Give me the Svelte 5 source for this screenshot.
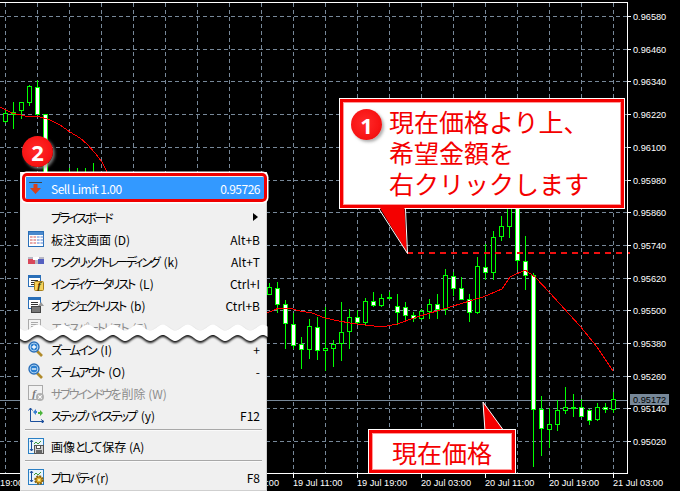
<script>
	// x, wick top, body top, body bottom, wick bottom, w = white (bear) / h = hollow (bull)
	const candles = [
		[5, 110, 113, 121, 123, 'h'], [13, 102, 112, 114, 129, 'h'], [21, 102, 102, 110, 119, 'h'],
		[29, 85, 86, 102, 106, 'h'], [37, 80, 87, 114, 114, 'w'], [45, 114, 114, 176, 176, 'w'],
		[69, 168, 176, 176, 176, 'h'], [77, 168, 176, 176, 176, 'h'], [85, 168, 176, 176, 176, 'h'], [93, 163, 176, 176, 176, 'h'],
		[269, 283, 287, 294, 295, 'h'], [277, 282, 288, 304, 313, 'w'], [285, 300, 304, 323, 349, 'w'],
		[293, 313, 324, 345, 349, 'w'], [301, 337, 344, 349, 369, 'w'], [309, 319, 326, 349, 359, 'h'],
		[317, 317, 327, 350, 360, 'w'], [325, 307, 348, 350, 371, 'h'], [333, 340, 344, 348, 367, 'h'],
		[341, 302, 332, 343, 361, 'h'], [349, 309, 317, 331, 349, 'h'], [357, 310, 317, 322, 325, 'w'],
		[365, 298, 301, 322, 325, 'h'], [373, 292, 301, 305, 307, 'w'], [381, 294, 298, 305, 307, 'h'],
		[389, 292, 297, 298, 299, 'w'], [397, 294, 306, 312, 325, 'w'], [405, 302, 307, 315, 322, 'w'],
		[413, 312, 315, 318, 322, 'w'], [421, 309, 311, 318, 320, 'h'], [429, 299, 304, 311, 319, 'h'],
		[437, 294, 304, 309, 319, 'w'], [445, 269, 275, 309, 315, 'h'], [453, 272, 276, 288, 296, 'w'],
		[461, 277, 288, 299, 299, 'w'], [469, 294, 299, 312, 322, 'w'], [477, 257, 266, 312, 314, 'h'],
		[485, 244, 267, 272, 280, 'w'], [493, 231, 237, 272, 280, 'h'], [501, 216, 226, 236, 241, 'h'],
		[509, 200, 205, 226, 238, 'h'], [517, 200, 205, 260, 270, 'w'], [525, 236, 261, 275, 290, 'w'],
		[533, 273, 275, 409, 467, 'w'], [541, 396, 409, 428, 456, 'w'], [549, 408, 424, 429, 448, 'h'],
		[557, 400, 410, 424, 431, 'h'], [565, 387, 407, 410, 414, 'h'], [573, 394, 407, 408, 417, 'h'],
		[581, 399, 407, 416, 417, 'w'], [589, 409, 410, 420, 425, 'w'], [597, 403, 407, 419, 421, 'h'],
		[605, 403, 407, 409, 413, 'w'], [613, 392, 399, 409, 413, 'h']
	];
	const maLeft = '0,107 12,113 25,116 37,116 50,120 60,125 70,132 80,138 87,144 95,153 102,162 108,174';
	const maRight = '262,315 267,313 279,308 289,308 300,311 312,313 325,318 339,321 350,323 357,324 382,327 397,324 417,317 450,307 483,297 502,289 510,277 525,270 535,277 550,293 580,326 597,347 613,371';

	const vLines = Array.from({ length: 20 }, (_, i) => 5 + i * 32);
	const prices = ['0.96580', '0.96460', '0.96340', '0.96220', '0.96100', '0.95980', '0.95860', '0.95740', '0.95620', '0.95500', '0.95380', '0.95260', '0.95140', '0.95020'];
	const priceY = (i) => Math.round(16 + i * 32.7);
	const times = [
		[-27, '18 Jul 19:00'], [229, '19 Jul 03:00'], [293, '19 Jul 11:00'], [357, '19 Jul 19:00'],
		[421, '20 Jul 03:00'], [485, '20 Jul 11:00'], [549, '20 Jul 19:00'], [613, '21 Jul 03:00']
	];

	const groups = [
		[
			{ icon: 'board', label: '板注文画面 (D)', key: 'Alt+B' },
			{ icon: 'oneclick', label: 'ワンクリックトレーディング (k)', key: 'Alt+T' },
			{ icon: 'indicator', label: 'インディケータリスト (L)', key: 'Ctrl+I' },
			{ icon: 'objects', label: 'オブジェクトリスト (b)', key: 'Ctrl+B' },
			{ icon: 'expert', label: 'エキスパートリスト (E)', key: '', off: true },
			{ icon: 'zoomin', label: 'ズームイン (I)', key: '+' },
			{ icon: 'zoomout', label: 'ズームアウト (O)', key: '-' },
			{ icon: 'fx', label: 'サブウインドウを削除 (W)', key: '', off: true },
			{ icon: 'step', label: 'ステップバイステップ (y)', key: 'F12' }
		],
		[{ icon: 'save', label: '画像として保存 (A)', key: '' }],
		[{ icon: 'prop', label: 'プロパティ(r)', key: 'F8' }]
	];

	// kana is set narrower than the rest of the label, as in the menu font of the original
	const runs = (label) => label.split(/([\u3040-\u30ff]+)/).filter(Boolean);
	const isKana = (run) => /^[\u3040-\u30ff]/.test(run);

	// wavy torn band across the menu
	function wave(y, dir) {
		let d = '';
		const xs = [];
		for (let x = 14; x <= 274; x += 2) xs.push(x);
		if (dir < 0) xs.reverse();
		xs.forEach((x, i) => {
			const py = y + 3 * Math.sin((x - 19) * Math.PI / 12.5);
			d += (i === 0 ? '' : 'L') + x + ' ' + py.toFixed(1) + ' ';
		});
		return d;
	}
	const wavePath = 'M' + wave(327.5, 1) + 'L' + wave(338, -1) + 'Z';
</script>

{#snippet chartDoc()}
	<rect x="0.5" y="0.5" width="12" height="11" fill="#fff" stroke="#2a6fb8" />
	<rect x="1" y="1" width="11" height="2" fill="#2a6fb8" />
	<path d="M3 5.5h7M3 7.5h7M3 9.5h4" stroke="#333" />
{/snippet}

{#snippet chartBox()}
	<rect x="0.5" y="0.5" width="15" height="15" fill="#e8f4fc" stroke="#2a7fc4" />
	<path d="M3.5 2v11M2 4l1.5-2L5 4M2 11l1.5 2L5 11" fill="none" stroke="#1b4f9c" />
	<path d="M6 6l2-2 2 2 3-3" fill="none" stroke="#3a9a3a" />
{/snippet}

{#snippet icon(name)}
	<svg class="ico" viewBox="0 0 16 16" width="16" height="16">
		{#if name === 'board'}
			<rect x="0.5" y="0.5" width="15" height="15" fill="#fff" stroke="#2a6fb8" />
			<rect x="1" y="1" width="14" height="3" fill="#4a88cc" />
			{#each [5, 8, 11] as cy}
				{#each [2, 5.5, 9, 12.5] as cx, i}
					<rect x={cx} y={cy} width="2.6" height="2" fill={i < 2 ? '#e8a9a9' : '#a9bfe8'} />
				{/each}
			{/each}
		{:else if name === 'oneclick'}
			<rect x="0" y="4" width="16" height="7" fill="#b8b8c4" />
			<rect x="0" y="6" width="7" height="5" fill="#d8475a" />
			<rect x="5" y="4" width="6" height="3" fill="#fff" />
			<rect x="10" y="6" width="6" height="5" fill="#5560c0" />
		{:else if name === 'indicator'}
			{@render chartDoc()}
			<rect x="6.5" y="6.5" width="9" height="9" rx="1" fill="#f5d25a" stroke="#a8801c" />
			<text x="11" y="14" class="ico-f" fill="#443300">f</text>
		{:else if name === 'objects'}
			{@render chartDoc()}
			<rect x="3.5" y="9.5" width="9" height="6" fill="#777" stroke="#444" />
			<path d="M10 9l3-4 3 4z" fill="#9a9a9a" />
		{:else if name === 'expert'}
			<rect x="0.5" y="0.5" width="12" height="11" fill="#f4f4f4" stroke="#aaa" />
			<path d="M3 3.5h7M3 5.5h7M3 7.5h7" stroke="#aaa" />
		{:else if name === 'zoomin' || name === 'zoomout'}
			<path d="M9 10l5 5" stroke="#b08a2a" stroke-width="2.6" />
			<circle cx="6" cy="6" r="5" fill="#cfe6fa" stroke="#2a6fb8" stroke-width="1.4" />
			<circle cx="6" cy="6" r="3.4" fill="#2a7fd0" />
			<path d={name === 'zoomin' ? 'M3.8 6h4.4M6 3.8v4.4' : 'M3.8 6h4.4'} stroke="#fff" stroke-width="1.3" />
		{:else if name === 'fx'}
			<rect x="0.5" y="0.5" width="14" height="14" fill="#f2f2f2" stroke="#aaa" />
			<text x="6" y="12" class="ico-f" fill="#777">f</text>
			<circle cx="12" cy="12" r="4" fill="#b0b0b0" />
			<path d="M10.3 10.3l3.4 3.4M13.7 10.3l-3.4 3.4" stroke="#fff" stroke-width="1.1" />
		{:else if name === 'step'}
			<path d="M2.5 1v13.5H16" fill="none" stroke="#1b4f9c" />
			<path d="M0.5 3.5l2-2.5 2 2.5M13 12.5l3 2-3 2" fill="none" stroke="#1b4f9c" />
			<path d="M5 5l3-3v2h1v2H8v2z" fill="#3a80d0" />
			<path d="M15 6l-3-3v2h-2v2h2v2z" fill="#4ab43a" />
		{:else if name === 'save'}
			{@render chartBox()}
			<rect x="6.5" y="7.5" width="9" height="8" fill="#d0d0d0" stroke="#555" />
			<rect x="8.5" y="7.5" width="4" height="3" fill="#fff" stroke="#555" />
			<rect x="8" y="12" width="6" height="3.5" fill="#666" />
		{:else if name === 'prop'}
			{@render chartBox()}
			<circle cx="11" cy="11" r="3.6" fill="#e0a820" stroke="#8a6410" stroke-width="2.4" stroke-dasharray="1.8 1" />
			<circle cx="11" cy="11" r="3" fill="#eab92e" stroke="#8a6410" stroke-width="0.8" />
			<circle cx="11" cy="11" r="1.1" fill="#fff4c0" />
		{/if}
	</svg>
{/snippet}

{#snippet label(text)}
	<span class="label">{#each runs(text) as run}{#if isKana(run)}<span class="kana">{run}</span>{:else}{run}{/if}{/each}</span>
{/snippet}

<div class="screen">
	<svg class="chart" width="680" height="491" viewBox="0 0 680 491">
		<g class="grid">
			{#each vLines as x}
				<line x1={x + 0.5} y1="3" x2={x + 0.5} y2="473" />
			{/each}
			{#each prices as _, i}
				<line x1="0" y1={priceY(i) + 0.5} x2="627" y2={priceY(i) + 0.5} />
			{/each}
		</g>

		<line class="price-line" x1="0" y1="400.5" x2="627" y2="400.5" />

		{#each candles as [x, wt, bt, bb, wb, kind]}
			<line class="wick" x1={x + 0.5} y1={wt} x2={x + 0.5} y2={wb} />
			{#if bb > bt}
				<rect class="body {kind}" x={x - 1.5} y={bt + 0.5} width="4" height={bb - bt} />
			{/if}
		{/each}

		<polyline class="ma" points={maLeft} />
		<polyline class="ma" points={maRight} />
		<line class="limit" x1="407" y1="253" x2="630" y2="253" />

		<path class="axis" d="M0 2.5H627.5V473.5H0" />
		{#each prices as p, i}
			<line class="axis" x1="627" y1={priceY(i) + 0.5} x2="631" y2={priceY(i) + 0.5} />
			<text class="tick" x="633" y={priceY(i) + 4}>{p}</text>
		{/each}
		{#each times as [x, t]}
			<line class="axis" x1={x + 0.5} y1="473" x2={x + 0.5} y2="478" />
			<text class="tick" x={x} y="486">{t}</text>
		{/each}

		<rect class="price-tag" x="630" y="394" width="39" height="11" />
		<text class="tick dark" x="633" y="403">0.95172</text>
	</svg>

	<div class="menu">
		<div class="item selected">
			<svg class="ico" viewBox="0 0 16 16" width="16" height="16">
				<path d="M1 2.5h13" stroke="#444" stroke-width="1" />
				<path d="M5.5 4h4v4H13l-5.500 6L2 8h3.500z" fill="#d8401c" />
			</svg>
			<span class="label">Sell Limit 1.00</span>
			<span class="key">0.95726</span>
		</div>
		<div class="item top-gap">
			<span class="ico"></span>
			{@render label('プライスボード')}
			<span class="arrow"></span>
		</div>
		{#each groups as group, g}
			{#if g > 0}<div class="sep"></div>{/if}
			{#each group as it}
				<div class="item" class:off={it.off}>
					{@render icon(it.icon)}
					{@render label(it.label)}
					<span class="key">{it.key}</span>
				</div>
			{/each}
		{/each}
	</div>

	<svg class="tear" width="680" height="491" viewBox="0 0 680 491">
		<clipPath id="tear-clip"><rect x="20" y="318" width="247.500" height="32" /></clipPath>
		<g clip-path="url(#tear-clip)">
			<path class="tear-band" d={wavePath} />
		</g>
	</svg>

	<div class="frame"></div>
	<div class="badge two">2</div>

	<div class="callout main">
		<div class="badge one">1</div>
		<p>現在価格より上、<br />希望金額を<br />右クリックします</p>
	</div>
	<svg class="tail" width="680" height="491" viewBox="0 0 680 491">
		<path class="tail-fill" d="M380 208L404.500 208 407 253z" />
		<path class="tail-edge" d="M405.500 209L407.500 253.500 379 209" />
		<path class="tail-fill" d="M483 402L485 431 504 431z" />
		<path class="tail-edge" d="M485 431L483 402 504 431" />
	</svg>
	<div class="callout now"><p>現在価格</p></div>
</div>

<style>
	:global(body) {
		background: #000;
		overflow: hidden;
	}

	.screen {
		position: relative;
		width: 680px;
		height: 491px;
		background: #000;
		overflow: hidden;
		font-family: "Noto Sans CJK JP", "Noto Sans", sans-serif;
	}

	/* ─── Chart ─── */
	.chart, .tear, .tail {
		position: absolute;
		left: 0;
		top: 0;
		pointer-events: none;
	}

	.grid line {
		stroke: #778899;
		stroke-width: 1;
		stroke-dasharray: 4 3;
		shape-rendering: crispEdges;
	}

	.price-line {
		stroke: #778899;
		shape-rendering: crispEdges;
	}

	.wick {
		stroke: #00ff00;
		shape-rendering: crispEdges;
	}

	.body {
		stroke: #00ff00;
		shape-rendering: crispEdges;
	}

	.body.w { fill: #fff; }
	.body.h { fill: #000; }

	.ma {
		fill: none;
		stroke: #ff0000;
		stroke-width: 1;
		shape-rendering: crispEdges;
	}

	.limit {
		stroke: #f01010;
		stroke-width: 2;
		stroke-dasharray: 6 5;
	}

	.axis {
		fill: none;
		stroke: #fff;
		shape-rendering: crispEdges;
	}

	.tick {
		font-family: "Liberation Sans", sans-serif;
		font-size: 9.200px;
		fill: #fff;
	}

	.tick.dark { fill: #000; }

	.price-tag { fill: #778899; }

	/* ─── Context menu ─── */
	.menu {
		position: absolute;
		box-sizing: border-box;
		left: 20px;
		top: 172px;
		width: 247px;
		height: 319px;
		padding: 3px 0 0;
		background: #f0f0f0;
		border: 1px solid #cfcfcf;
		border-left-color: #e8e8e8;
		border-top-color: #fff;
		color: #000;
		font-size: 12px;
		font-feature-settings: "palt";
	}

	.item {
		display: flex;
		align-items: center;
		height: 22px;
		padding: 0 6px 0 7px;
	}

	.top-gap { margin-top: 7px; }

	.ico {
		flex: none;
		width: 16px;
		height: 16px;
		margin-right: 7px;
	}

	.ico-f {
		font-family: "Liberation Serif", serif;
		font-style: italic;
		font-weight: 700;
		font-size: 11px;
		text-anchor: middle;
	}

	.label {
		flex: 1;
		white-space: nowrap;
	}

	.kana {
		letter-spacing: -2.100px;
		margin-right: 2.100px;
	}

	.key { white-space: nowrap; }

	.off { color: #8d8d8d; }

	.selected {
		margin: 1px 2px 0 5px;
		padding: 0 4px 0 2px;
		background: #3399ff;
		color: #fff;
		letter-spacing: -0.500px;
	}

	.arrow {
		width: 0;
		height: 0;
		margin-right: 2px;
		border-left: 5px solid #000;
		border-top: 4px solid transparent;
		border-bottom: 4px solid transparent;
	}

	.sep {
		height: 1px;
		margin: 3px 4px 5px 4px;
		background: #a8a8a8;
		box-shadow: 0 1px 0 #fafafa;
	}

	.tear-band {
		fill: #fff;
		filter: drop-shadow(0 2px 1.200px #111);
	}

	.frame {
		position: absolute;
		left: 25px;
		top: 176px;
		width: 239px;
		height: 23px;
		border-radius: 2px;
		box-shadow: 0 0 0 3px #f00000, 0 0 0 4.500px #fff;
	}

	/* ─── Annotations ─── */
	.badge {
		position: absolute;
		display: flex;
		align-items: center;
		justify-content: center;
		width: 31px;
		height: 31px;
		border-radius: 50%;
		background: radial-gradient(circle at 45% 45%, #ff2a2a 0%, #f81414 60%, #d80808 100%);
		box-shadow: 2px 2px 3px rgba(150, 150, 150, 0.75);
		color: #fff;
		font-family: "Noto Sans", sans-serif;
		font-weight: 700;
		font-size: 22px;
		line-height: 1;
	}

	.badge.two {
		left: 22px;
		top: 136px;
	}

	.badge.one {
		left: 8px;
		top: 7px;
	}

	.callout {
		position: absolute;
		box-sizing: border-box;
		background: #fff;
		border: 3px solid #f40000;
		outline: 1px solid #fff;
		box-shadow: inset 0 0 0 1px #ff9a9a;
		color: #f40000;
	}

	.callout p {
		margin: 0;
		font-weight: 400;
		white-space: nowrap;
	}

	.callout.main {
		left: 340px;
		top: 99px;
		width: 284px;
		height: 109px;
		padding: 4px 0 0 46px;
		font-size: 25px;
		line-height: 31px;
	}

	.callout.now {
		display: flex;
		align-items: center;
		justify-content: center;
		left: 369px;
		top: 430px;
		width: 146px;
		height: 43px;
		font-size: 25px;
	}

	.tail-fill { fill: #f40000; }

	.tail-edge {
		fill: none;
		stroke: #fff;
		stroke-width: 1;
	}
</style>
